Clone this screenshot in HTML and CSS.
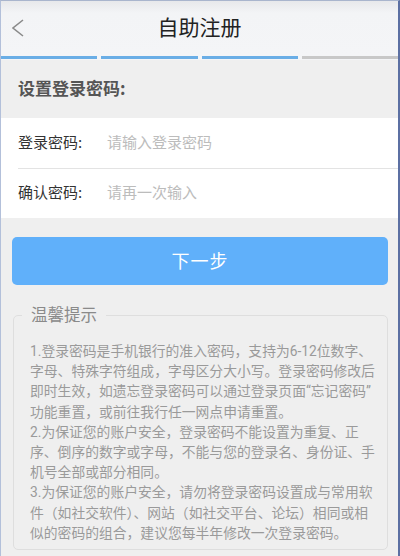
FILE: index.html
```html
<!DOCTYPE html>
<html lang="zh-CN">
<head>
<meta charset="utf-8">
<title>自助注册</title>
<link rel="stylesheet" href="styles.css">
</head>
<body>
<div class="page">
  <header class="header">
    <span class="back">
      <svg width="14" height="20" viewBox="0 0 14 20"><polyline points="11,2 1,10 11,18" fill="none" stroke="#8a8a8a" stroke-width="1.6"/></svg>
    </span>
    <h1 class="title">自助注册</h1>
    <span></span>
  </header>
  <div class="progress">
    <span class="seg on"></span>
    <span class="seg on"></span>
    <span class="seg on"></span>
    <span class="seg"></span>
  </div>
  <div class="section-title">设置登录密码:</div>
  <div class="form">
    <label class="row">
      <span class="label">登录密码:</span>
      <input class="input" type="password" placeholder="请输入登录密码">
    </label>
    <label class="row">
      <span class="label">确认密码:</span>
      <input class="input" type="password" placeholder="请再一次输入">
    </label>
  </div>
  <button class="next" type="button">下一步</button>
  <fieldset class="tips">
    <legend class="tips-title">温馨提示</legend>
    <p>1.登录密码是手机银行的准入密码，支持为6-12位数字、<br>字母、特殊字符组成，字母区分大小写。登录密码修改后<br>即时生效，如遗忘登录密码可以通过登录页面“忘记密码”<br>功能重置，或前往我行任一网点申请重置。</p>
    <p>2.为保证您的账户安全，登录密码不能设置为重复、正<br>序、倒序的数字或字母，不能与您的登录名、身份证、手<br>机号全部或部分相同。</p>
    <p>3.为保证您的账户安全，请勿将登录密码设置成与常用软<br>件（如社交软件）、网站（如社交平台、论坛）相同或相<br>似的密码的组合，建议您每半年修改一次登录密码。</p>
  </fieldset>
</div>
</body>
</html>
```
FILE: styles.css
```css
* { box-sizing: border-box; }
html, body { margin: 0; padding: 0; }
body {
  background: #efefef;
  font-family: "Noto Sans CJK SC", "Noto Sans", sans-serif;
  color: #333;
}
.page {
  height: 556px;
  border-top: 1px solid #a9b5cd;
  border-left: 1px solid #b3c0da;
  border-right: 2px solid #5c70a3;
  background: #efefef;
  overflow: hidden;
}
.header {
  height: 54px;
  display: grid;
  grid-template-columns: 40px 1fr 40px;
  align-items: center;
  background: linear-gradient(#e7e8eb 0, #f3f4f6 12px, #f4f5f7 100%);
}
.back {
  display: flex;
  align-items: center;
  padding-left: 11px;
}
.title {
  margin: 0;
  text-align: center;
  font-size: 21px;
  font-weight: normal;
  color: #222;
  line-height: 28px;
  padding-bottom: 4px;
}
.progress {
  display: grid;
  grid-template-columns: repeat(4, 1fr);
  gap: 4px;
  padding: 1px 0 1px;
  background: #f4f5f7;
}
.seg {
  height: 3px;
  background: #c8c8c8;
}
.seg.on { background: #6aaee6; }
.section-title {
  height: 58px;
  display: flex;
  align-items: center;
  padding-left: 17px;
  padding-bottom: 3px;
  font-size: 17px;
  font-weight: bold;
  color: #555;
  background: #efefef;
}
.form {
  background: #fff;
}
.row {
  height: 50px;
  margin-left: 17px;
  padding-bottom: 4px;
  display: flex;
  align-items: center;
}
.row + .row { border-top: 1px solid #e3e3e3; }
.label {
  width: 89px;
  font-size: 15px;
  color: #333;
}
.input {
  flex: 1;
  border: 0;
  outline: none;
  background: transparent;
  font-family: inherit;
  font-size: 15px;
  padding: 0;
  color: #333;
}
.input::placeholder { color: #bcbcbc; }
.next {
  display: block;
  width: calc(100% - 21px);
  height: 48px;
  margin: 19px 10px 0 11px;
  padding: 0 0 3px;
  border: 0;
  border-radius: 5px;
  background: #60b0fa;
  color: #fff;
  font-family: inherit;
  font-size: 18px;
  letter-spacing: 1px;
}
.tips {
  margin: 19px 10px 0 12px;
  padding: 14px 6px 6px 16px;
  border: 1px solid #dedede;
  border-radius: 5px;
  min-width: 0;
}
.tips-title {
  margin-left: -8px;
  padding: 0 9px 3px;
  font-size: 16.5px;
  line-height: 20px;
  color: #8a8a8a;
}
.tips p {
  margin: 0;
  font-family: Roboto, "Noto Sans CJK SC", sans-serif;
  font-size: 13.8px;
  line-height: 20.2px;
  color: #9a9a9a;
  white-space: nowrap;
}
```
